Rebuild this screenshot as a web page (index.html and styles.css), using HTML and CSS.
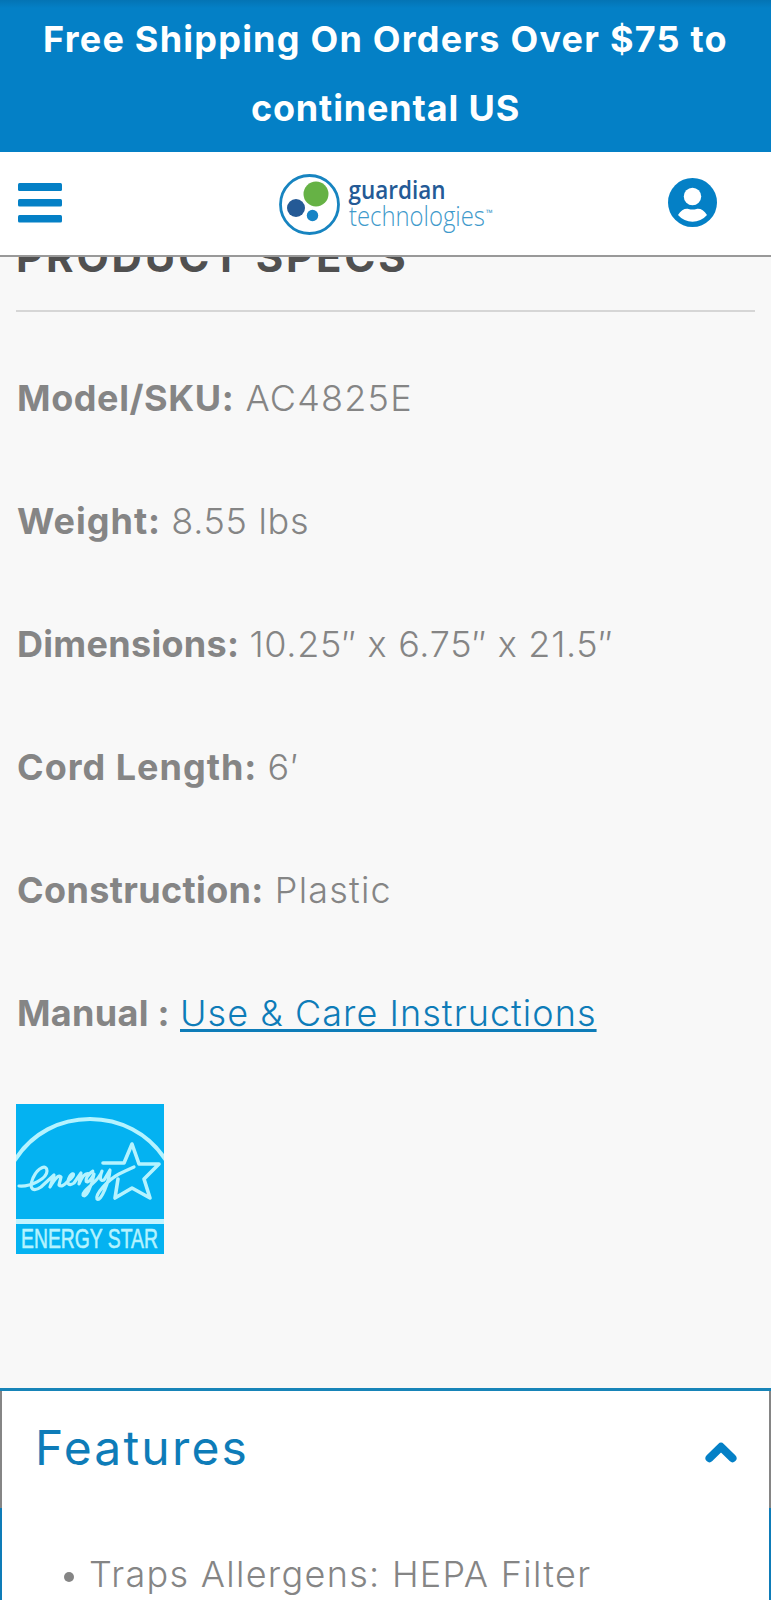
FILE: index.html
```html
<!DOCTYPE html>
<html lang="en">
<head>
  <meta charset="UTF-8">
  <title>Guardian Technologies - AC4825E</title>
  <link rel="stylesheet" href="styles.css">
</head>
<body>
  <div class="promo">
    <p class="promo-top">Free Shipping On Orders Over $75 to</p>
    <p>continental US</p>
  </div>

  <header class="header">
    <button class="icon-button" aria-label="Menu">
      <svg width="44" height="40" viewBox="0 0 44 40" fill="#0480c6">
        <rect y="0" width="44" height="8" rx="1.5"/>
        <rect y="16" width="44" height="7.5" rx="1.5"/>
        <rect y="32" width="44" height="7.5" rx="1.5"/>
      </svg>
    </button>
    <a class="logo">
      <svg width="220" height="64" viewBox="0 0 220 64">
        <circle cx="30.5" cy="31.5" r="29" fill="#fff" stroke="#1784c0" stroke-width="2.8"/>
        <circle cx="37" cy="21" r="12.5" fill="#66b245"/>
        <circle cx="17" cy="35" r="9" fill="#245a96"/>
        <circle cx="33.5" cy="42.5" r="5.7" fill="#1784c6"/>
        <text class="logo-name" x="69.5" y="25.5" textLength="97" lengthAdjust="spacingAndGlyphs">guardian</text>
        <text class="logo-sub" x="70" y="52.5" textLength="136" lengthAdjust="spacingAndGlyphs">technologies</text>
        <text class="logo-tm" x="207" y="43">™</text>
      </svg>
    </a>
    <button class="icon-button" aria-label="Account">
      <svg width="49" height="49" viewBox="0 0 49 49">
        <circle cx="24.5" cy="24.5" r="24.5" fill="#0480c6"/>
        <circle cx="24.5" cy="18.5" r="8.7" fill="#fff"/>
        <path d="M10 37C13 32 17 30.3 20.5 31Q24.5 32 28.5 31C32 30.3 36 32 39 37C35 41.5 30 43.7 24.5 43.7S14 41.5 10 37Z" fill="#fff"/>
      </svg>
    </button>
  </header>

  <main class="specs">
    <h2>PRODUCT SPECS</h2>
    <p class="spec sku"><strong>Model/SKU:</strong> <span>AC4825E</span></p>
    <p class="spec weight"><strong>Weight:</strong> <span>8.55 lbs</span></p>
    <p class="spec size"><strong>Dimensions:</strong> <span>10.25″ x 6.75″ x 21.5″</span></p>
    <p class="spec cord"><strong>Cord Length:</strong> <span>6′</span></p>
    <p class="spec build"><strong>Construction:</strong> <span>Plastic</span></p>
    <p class="spec manual"><strong>Manual :</strong> <a href="#">Use &amp; Care Instructions</a></p>
    <svg class="energy" width="148" height="150" viewBox="0 0 148 150">
      <rect width="148" height="150" fill="#04b2f1"/>
      <g fill="none" stroke="#b5f3ff" stroke-linecap="round" stroke-linejoin="round">
        <path d="M-1 56C16 29 44 15 74 15S132 29 149 55" stroke-width="4"/>
        <path d="M87 59H108L116 40L123 60H143L128 75L134 94L116 84L99 94L102 75" stroke-width="3.6"/>
        <path d="M3 82C14 83 31 75 31 67C31 60 22 63 17 74C12 86 18 88 25 83L38 71L34 83Q42 69 45 73L43 81Q46 84 52 77C60 71 58 67 54 72C50 79 52 83 58 79L65 69L63 80Q68 68 73 70C80 65 76 67 71 73C68 80 73 80 78 70C76 83 69 95 67 91C66 86 84 77 86 67Q82 78 88 76L94 66C93 78 85 98 81 95C79 90 92 76 103 70Q109 67 118 63" stroke-width="3.2"/>
      </g>
      <rect y="115" width="148" height="5" fill="#c4f4ff"/>
      <text class="energy-text" x="5" y="144" textLength="137" lengthAdjust="spacingAndGlyphs">ENERGY STAR</text>
    </svg>
  </main>

  <section class="features">
    <div class="features-head">
      <h3>Features</h3>
      <svg width="32" height="21" viewBox="0 0 32 21" fill="none" stroke="#0480c6" stroke-width="8" stroke-linecap="round" stroke-linejoin="round">
        <path d="M4.5 16.2L16 4.8L27.5 16.2"/>
      </svg>
    </div>
    <ul class="features-body">
      <li>Traps Allergens: HEPA Filter</li>
    </ul>
  </section>
</body>
</html>
```
FILE: styles.css
```css
* {
  box-sizing: border-box;
}
body {
  margin: 0;
  height: 1600px;
  overflow: hidden;
  background: #f8f8f8;
  color: #858585;
  font-family: Inter, "Open Sans", sans-serif;
  font-size: 36px;
  font-weight: 300;
}
h2, h3, p, ul {
  margin: 0;
  padding: 0;
}
.promo {
  height: 152px;
  padding-top: 5px;
  background: linear-gradient(#0474b4, #0480c6 8px);
  color: #fff;
  font-weight: 700;
  letter-spacing: 0.85px;
  line-height: 69px;
  text-align: center;
  white-space: nowrap;
}
.promo-top {
  letter-spacing: 1.23px;
}
.header {
  display: flex;
  justify-content: space-between;
  align-items: center;
  height: 105px;
  padding: 0 54px 2px 18px;
  background: #fff;
  border-bottom: 2px solid #999;
}
.icon-button {
  display: flex;
  padding: 0;
  border: 0;
  background: none;
}
.logo {
  display: flex;
  margin: 4px 0 0 47px;
}
.logo svg {
  overflow: visible;
}
.logo-name {
  font: 600 26px "Open Sans", sans-serif;
  fill: #245a96;
}
.logo-sub {
  font: 300 27px "Open Sans", sans-serif;
  fill: #3f9acb;
}
.logo-tm {
  font: 400 9px "Open Sans", sans-serif;
  fill: #3f9acb;
}
.specs {
  height: 1131px;
  padding: 0 16px;
  overflow: hidden;
}
.specs h2 {
  height: 81px;
  margin: -26px 0 38px;
  border-bottom: 2px solid #d6d6d6;
  color: #505050;
  font-size: 42px;
  font-weight: 700;
  letter-spacing: 2.8px;
  line-height: 51px;
}
.spec {
  height: 123px;
  padding-left: 1px;
  line-height: 97px;
  white-space: nowrap;
}
.spec strong {
  font-weight: 700;
}
.sku strong {
  letter-spacing: 0.6px;
}
.sku span {
  margin-left: 1px;
  letter-spacing: 1.2px;
}
.weight strong {
  letter-spacing: 1px;
}
.weight span {
  letter-spacing: 0.7px;
}
.size strong {
  letter-spacing: 0.3px;
}
.size span {
  letter-spacing: 0.7px;
}
.cord strong {
  letter-spacing: 1px;
}
.cord span {
  letter-spacing: 1.5px;
}
.build strong {
  letter-spacing: 0.35px;
}
.build span {
  margin-left: 1px;
  letter-spacing: 1.2px;
}
.manual strong {
  letter-spacing: 0.3px;
}
.manual a {
  color: #0e7cb8;
  letter-spacing: 1.05px;
  text-decoration-thickness: 3px;
  text-underline-offset: 3px;
  text-decoration-skip-ink: none;
}
.energy {
  display: block;
  margin-top: 16px;
}
.energy-text {
  font: 400 27px "Liberation Sans", sans-serif;
  fill: #b5f3ff;
  stroke: #b5f3ff;
  stroke-width: 0.6px;
}
.features {
  height: 220px;
  border-top: 3px solid #1784b8;
  background: #fff;
}
.features-head {
  display: flex;
  justify-content: space-between;
  height: 117px;
  padding: 0 32px 0 33px;
  border: solid #858585;
  border-width: 0 2px;
}
.features-head h3 {
  color: #0e7cb8;
  font-size: 48px;
  font-weight: 400;
  letter-spacing: 2.2px;
  line-height: 113px;
}
.features-head svg {
  margin-top: 51px;
}
.features-body {
  height: 100px;
  padding: 18px 0 0 86px;
  border: solid #0e7cb8;
  border-width: 0 2px;
  letter-spacing: 1.3px;
  line-height: 97px;
  list-style: none;
}
.features-body li {
  display: flex;
  align-items: center;
}
.features-body li::before {
  content: "";
  width: 10px;
  height: 10px;
  margin: 4px 15px 0 -24px;
  border-radius: 50%;
  background: #858585;
}
```
